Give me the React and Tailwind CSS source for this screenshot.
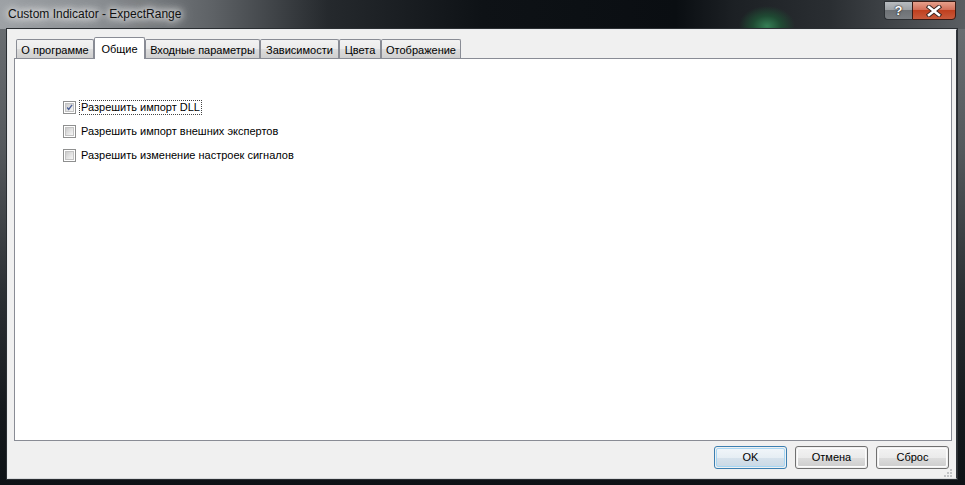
import React from "react";

function Tab({ label, w, selected }) {
  if (selected) {
    return (
      <div
        className={`relative z-10 -mb-[1px] h-[22px] flex justify-center pt-[3px] bg-white border border-b-0 border-[#898c95] rounded-t-[2px] text-[11px] text-black`}
        style={{ width: w }}
      >
        {label}
      </div>
    );
  }
  return (
    <div
      className="h-[19px] flex justify-center pt-[2px] bg-[linear-gradient(to_bottom,#f2f2f2_0%,#ebebeb_50%,#dddddd_51%,#cfcfcf_100%)] border border-b-0 border-[#898c95] rounded-t-[2px] text-[11px] text-black"
      style={{ width: w }}
    >
      {label}
    </div>
  );
}

function Check({ checked, label, focus }) {
  return (
    <div className="flex items-center h-[13px]">
      <div className="w-[13px] h-[13px] border border-[#8e8f8f] bg-white p-[1px] shrink-0">
        <div className="w-full h-full border border-[#c3c3c3] bg-[linear-gradient(135deg,#cbcbcb_0%,#e6e6e6_60%,#f6f6f6_100%)] flex items-center justify-center">
          {checked && (
            <svg width="9" height="9" viewBox="0 0 9 9">
              <path d="M1.5 4.5 L3.5 7 L7.8 1.2" fill="none" stroke="#4a5f97" strokeWidth="1.7" />
            </svg>
          )}
        </div>
      </div>
      <span
        className={`ml-[3px] px-[1px] text-[11px] leading-[13px] text-black border border-dotted ${
          focus ? "border-[#444]" : "border-transparent"
        }`}
      >
        {label}
      </span>
    </div>
  );
}

function Btn({ label, def }) {
  return (
    <div
      className={`w-[73px] h-[23px] rounded-[3px] border ${
        def ? "border-[#3c7fb1]" : "border-[#707070]"
      } p-[1px]`}
    >
      <div
        className={`w-full h-full rounded-[2px] flex items-center justify-center text-[11px] text-black ${
          def
            ? "bg-[linear-gradient(to_bottom,#f0f5f9_0%,#e6eef4_50%,#d6e2ec_51%,#cbdae6_100%)] border border-[#a6d6f3]"
            : "bg-[linear-gradient(to_bottom,#f2f2f2_0%,#ebebeb_50%,#dddddd_51%,#cfcfcf_100%)] border border-[#fcfcfc]"
        }`}
      >
        {label}
      </div>
    </div>
  );
}

export default function App() {
  return (
    <div
      className="w-[965px] h-[485px] flex flex-col overflow-hidden relative bg-[linear-gradient(to_bottom,#6e7276_0%,#55595d_30%,#2c3034_60%,#15191d_85%,#0e1216_100%)]"
      style={{ fontFamily: '"Liberation Sans", Arial, sans-serif' }}
    >
      {/* title bar */}
      <div className="h-[29px] shrink-0 flex items-start relative bg-[radial-gradient(ellipse_28px_20px_at_767px_26px,#357f55_0%,#1f4a33_50%,transparent_100%),linear-gradient(to_right,#9da1a5_0%,#8a8e92_10%,#5e6266_22%,#25292d_34%,#0e1216_50%,#0a0e12_70%,#1c2024_76%,#2a2e32_86%,#5a5e62_100%)]">
        <span className="mt-[7px] ml-[8px] text-[12px] leading-[15px] text-[#111] [text-shadow:0_0_6px_#fff,0_0_10px_#fff,0_0_14px_#e8e8e8]">
          Custom Indicator - ExpectRange
        </span>
        <div className="ml-auto mr-[9px] mt-[1px] flex">
          <div className="w-[28px] h-[19px] border border-[#2c3034] border-r-0 rounded-bl-[4px] bg-[linear-gradient(to_bottom,#b8bcc0_0%,#9ea2a6_45%,#6e7276_50%,#7a7e82_100%)] flex items-center justify-center text-white font-bold text-[13px] leading-none [text-shadow:0_0_2px_#222,0_0_1px_#000]">
            ?
          </div>
          <div className="w-[44px] h-[19px] border border-[#3a1a14] rounded-br-[4px] bg-[linear-gradient(to_bottom,#e6a08c_0%,#d3705a_45%,#c0401f_50%,#c85a3c_100%)] flex items-center justify-center">
            <svg width="16" height="12" viewBox="0 0 16 12">
              <path d="M3 2 L13 10 M13 2 L3 10" stroke="#3a2420" strokeWidth="4.4" strokeLinecap="square" />
              <path d="M3 2 L13 10 M13 2 L3 10" stroke="#ffffff" strokeWidth="2.6" strokeLinecap="square" />
            </svg>
          </div>
        </div>
      </div>

      {/* body */}
      <div className="flex-1 flex pl-[7px] pr-[8px] pb-[7px] relative bg-[radial-gradient(ellipse_40px_8px_at_50px_482px,#3f8a5e_0%,transparent_100%)]">
        <div className="flex-1 flex flex-col bg-[#f0f0f0] border border-t-[#e9ebed] border-l-[#e9ebed] border-r-[#30343a] border-b-[#d8dadc] pl-[6px] pr-[4px] pt-[7px] shadow-[0_0_0_1px_#2a2e32]">
          <div className="h-[21px] flex items-end pl-[2px]">
            <Tab label="О программе" w={78} />
            <Tab label="Общие" w={51} selected />
            <Tab label="Входные параметры" w={115} />
            <Tab label="Зависимости" w={79} />
            <Tab label="Цвета" w={42} />
            <Tab label="Отображение" w={80} />
          </div>
          <div className="h-[383px] bg-white border border-[#898c95] flex flex-col gap-[11px] pt-[42px] pl-[48px]">
            <Check checked label="Разрешить импорт DLL" focus />
            <Check label="Разрешить импорт внешних экспертов" />
            <Check label="Разрешить изменение настроек сигналов" />
          </div>
          <div className="flex justify-end gap-[8px] mt-[5px] pr-[3px]">
            <Btn label="OK" def />
            <Btn label="Отмена" />
            <Btn label="Сброс" />
          </div>
          <div className="flex-1 flex justify-end items-end pr-[0px] pb-[1px]">
            <svg width="8" height="8" viewBox="0 0 8 8">
              <rect x="6" y="0" width="2" height="2" fill="#c2c4c6" />
              <rect x="3" y="3" width="2" height="2" fill="#c2c4c6" />
              <rect x="6" y="3" width="2" height="2" fill="#c2c4c6" />
              <rect x="0" y="6" width="2" height="2" fill="#c2c4c6" />
              <rect x="3" y="6" width="2" height="2" fill="#c2c4c6" />
              <rect x="6" y="6" width="2" height="2" fill="#c2c4c6" />
            </svg>
          </div>
        </div>
      </div>
    </div>
  );
}
